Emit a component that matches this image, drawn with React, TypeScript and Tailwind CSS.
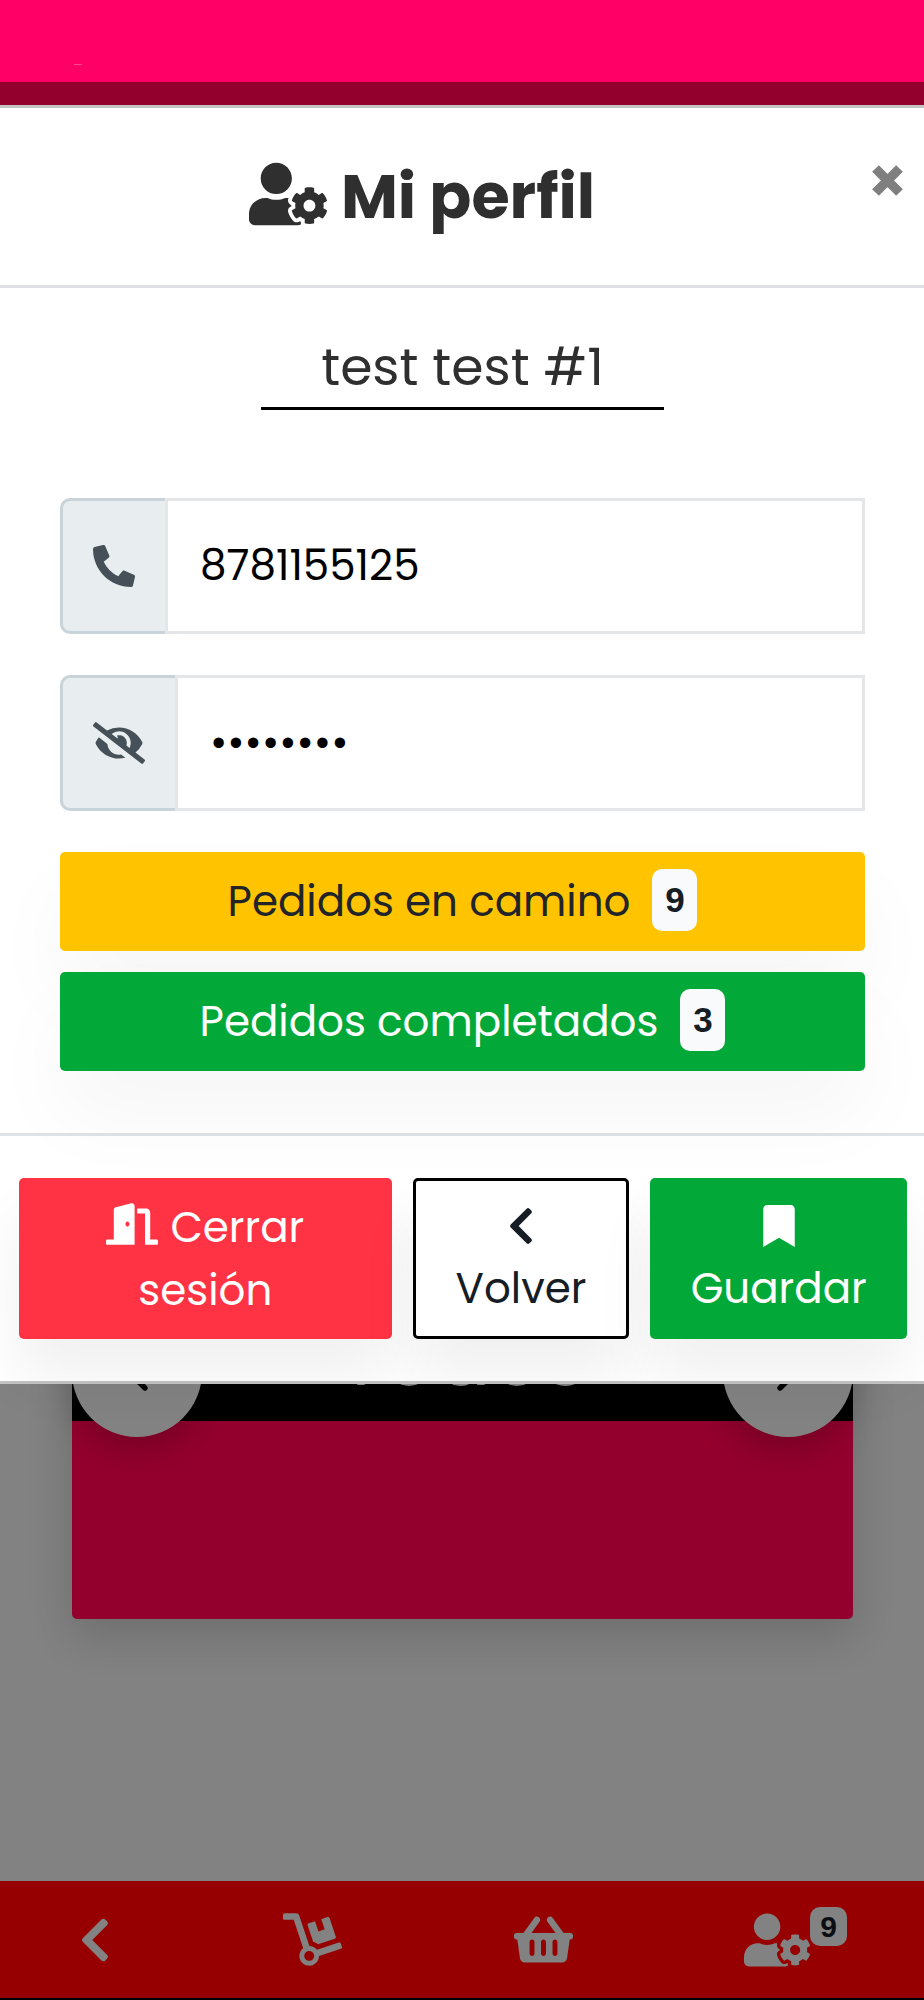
import { type ReactNode, useState } from "react";
import { ChevronLeft, ChevronRight } from "lucide-react";
import {
  FaBookmark,
  FaChevronLeft,
  FaDolly,
  FaDoorOpen,
  FaEyeSlash,
  FaPhoneAlt,
  FaShoppingBasket,
  FaUserCog,
} from "react-icons/fa";

function cx(...values: Array<string | false | null | undefined>) {
  return values.filter(Boolean).join(" ");
}

function FieldGroup({
  id,
  label,
  icon,
  children,
}: {
  id: string;
  label: string;
  icon: ReactNode;
  children: ReactNode;
}) {
  return (
    <div className="flex h-[136px] items-stretch">
      <label
        htmlFor={id}
        aria-label={label}
        className="flex shrink-0 items-center rounded-l-[10px] border-[3px] border-r-0 border-[#c9d3da] bg-[#e8edef] px-[30px] text-[#455058]"
      >
        {icon}
      </label>
      {children}
    </div>
  );
}

function OrdersButton({
  label,
  count,
  className,
}: {
  label: string;
  count: number;
  className: string;
}) {
  return (
    <button
      type="button"
      className={cx(
        "flex h-[99px] w-full items-center justify-center gap-[22px] rounded-[5px] text-[42px] leading-[62px] shadow-[0_44px_84px_rgba(0,0,0,0.04)]",
        className,
      )}
    >
      {label}
      <span className="mb-1 flex h-[62px] w-[45px] items-center justify-center rounded-[10px] bg-[#f8fafc] font-['Liberation_Sans',sans-serif] text-[35px] font-bold text-[#161d24]">
        {count}
      </span>
    </button>
  );
}

function ProfileModal() {
  const [name, setName] = useState("test test #1");
  const [phone, setPhone] = useState("8781155125");
  const [password, setPassword] = useState("password");

  return (
    <div
      role="dialog"
      aria-labelledby="profile-title"
      className="absolute inset-x-0 top-[105px] border-y-[3px] border-[#c4c4c4] bg-white"
    >
      <header className="flex h-[180px] items-center border-b-[3px] border-[#dee2e6]">
        <h1
          id="profile-title"
          className="flex flex-1 items-center justify-center gap-[14px] pr-[28px] text-[62px] font-bold leading-[72px] text-[#2f2f2f]"
        >
          <FaUserCog aria-hidden="true" className="mb-1.5 size-[78px]" />
          Mi perfil
        </h1>
        <button type="button" aria-label="Cerrar" className="mb-8 mr-[21px] text-[#7f7f7f]">
          <svg aria-hidden="true" viewBox="0 0 31 31" className="size-[31px]">
            <path
              d="M3.5 3.5 27.5 27.5M27.5 3.5 3.5 27.5"
              fill="none"
              stroke="currentColor"
              strokeWidth="9.5"
            />
          </svg>
        </button>
      </header>

      <div className="flex flex-col items-center pb-[62px] pl-[60px] pr-[59px] pt-[40px]">
        <input
          aria-label="Nombre"
          value={name}
          onChange={(event) => setName(event.target.value)}
          className="h-[82px] w-1/2 border-b-[3px] border-black pb-0.5 text-center text-[52px] text-[#2f2f2f] outline-none"
        />

        <div className="mt-[88px] flex w-full flex-col gap-[41px]">
          <FieldGroup
            id="phone"
            label="Teléfono"
            icon={<FaPhoneAlt aria-hidden="true" className="size-[42px]" />}
          >
            <input
              id="phone"
              type="tel"
              value={phone}
              onChange={(event) => setPhone(event.target.value)}
              className="min-w-0 flex-1 border-[3px] border-[#e4e6e7] px-[32px] pb-0.5 text-[42px] text-black outline-none"
            />
          </FieldGroup>
          <FieldGroup
            id="password"
            label="Contraseña"
            icon={<FaEyeSlash aria-hidden="true" className="h-[42px] w-[52px]" />}
          >
            <input
              id="password"
              type="password"
              value={password}
              onChange={(event) => setPassword(event.target.value)}
              className="min-w-0 flex-1 border-[3px] border-[#e4e6e7] px-[32px] pb-0.5 text-[42px] text-black outline-none"
            />
          </FieldGroup>
        </div>

        <div className="mt-[41px] flex w-full flex-col gap-[21px]">
          <OrdersButton label="Pedidos en camino" count={9} className="bg-[#ffc300] text-[#212529]" />
          <OrdersButton label="Pedidos completados" count={3} className="bg-[#02a938] text-white" />
        </div>
      </div>

      <footer className="flex justify-between gap-[21px] border-t-[3px] border-[#dde3e6] py-[42px] pl-[19px] pr-[17px] text-[42px] leading-[63px]">
        <button
          type="button"
          className="h-[161px] w-[373px] rounded-[5px] bg-[#ff3343] px-[60px] text-white shadow-[0_40px_60px_rgba(0,0,0,0.06)]"
        >
          <FaDoorOpen aria-hidden="true" className="mr-3 inline size-[52px] align-[-8px]" />
          Cerrar sesión
        </button>
        <button
          type="button"
          className="flex h-[161px] w-[217px] flex-col items-center rounded-[5px] border-[3px] border-black bg-white pt-[14px] text-[#161d24] shadow-[0_40px_60px_rgba(0,0,0,0.06)]"
        >
          <FaChevronLeft aria-hidden="true" className="my-[10px] size-[42px]" />
          Volver
        </button>
        <button
          type="button"
          className="flex h-[161px] w-[257px] flex-col items-center rounded-[5px] bg-[#02a938] pt-[17px] text-white shadow-[0_40px_60px_rgba(0,0,0,0.06)]"
        >
          <FaBookmark aria-hidden="true" className="my-[10px] size-[42px]" />
          Guardar
        </button>
      </footer>
    </div>
  );
}

function CarouselButton({ label, children }: { label: string; children: ReactNode }) {
  return (
    <button
      type="button"
      aria-label={label}
      className="flex size-[130px] items-center justify-center rounded-full bg-[#828282] text-black shadow-[0_12px_36px_rgba(0,0,0,0.22)]"
    >
      {children}
    </button>
  );
}

export default function App() {
  return (
    <div
      className="relative flex min-h-screen flex-col bg-[#828282]"
      style={{ fontFamily: 'Poppins, Inter, "Noto Sans", sans-serif' }}
    >
      <div className="flex h-[82px] shrink-0 items-end bg-[#ff0066] pb-[17px] pl-[74px]">
        <span className="h-px w-2 bg-white/30" />
      </div>
      <div className="h-[120px] shrink-0 bg-[#94002e]" />

      <main className="flex flex-1 flex-col justify-end pb-[262px] pl-[72px] pr-[71px]">
        <section className="rounded-[5px] bg-[#94002e] pb-[182px] shadow-[0_16px_44px_rgba(0,0,0,0.16)]">
          <div className="flex items-center justify-between bg-gradient-to-b from-black from-[114px] to-transparent to-[114px]">
            <CarouselButton label="Anterior">
              <ChevronLeft aria-hidden="true" className="size-16" />
            </CarouselButton>
            <h2 className="mb-[30px] text-[82px] leading-[70px] text-[#828282]">Todos</h2>
            <CarouselButton label="Siguiente">
              <ChevronRight aria-hidden="true" className="size-16" />
            </CarouselButton>
          </div>
        </section>
      </main>

      <nav className="flex h-[119px] shrink-0 items-center justify-between border-b-2 border-black bg-[#960000] pl-[78px] pr-[77px] text-[#828282]">
        <a href="#atras" aria-label="Atrás">
          <FaChevronLeft aria-hidden="true" className="h-[50px] w-[34px]" />
        </a>
        <a href="#pedidos" aria-label="Pedidos">
          <FaDolly aria-hidden="true" className="size-[59px]" />
        </a>
        <a href="#carrito" aria-label="Carrito">
          <FaShoppingBasket aria-hidden="true" className="size-[59px]" />
        </a>
        <a href="#perfil" aria-label="Perfil" className="flex items-start">
          <FaUserCog aria-hidden="true" className="size-[66px]" />
          <span className="flex h-[39px] w-[37px] items-center justify-center rounded-[10px] bg-[#828282] font-['Liberation_Sans',sans-serif] text-[30px] font-bold text-[#0b0e12]">
            9
          </span>
        </a>
      </nav>

      <ProfileModal />
    </div>
  );
}
